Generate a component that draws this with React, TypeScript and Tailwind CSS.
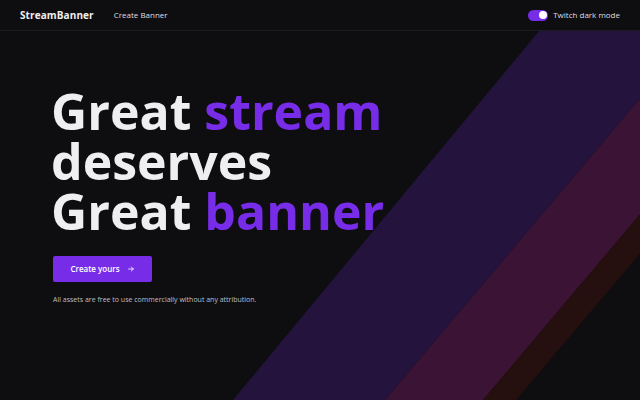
import React from "react";

export default function App() {
  return (
    <div
      className="relative w-[640px] h-[400px] overflow-hidden bg-[#0e0e10] text-[#efeff1]"
      style={{ fontFamily: '"Open Sans", "Noto Sans", sans-serif' }}
    >
      <svg
        className="absolute inset-0"
        width="640"
        height="400"
        viewBox="0 0 640 400"
      >
        <polygon points="539,31 697,31 385,400 233,400" fill="#23133d" />
        <polygon points="697,31 795,31 483,400 385,400" fill="#3a1335" />
        <polygon points="795,31 828,31 516,400 483,400" fill="#26100f" />
      </svg>

      <header className="relative flex items-center h-[31px] border-b border-[#1c1c20] px-5 bg-[#0e0e10]">
        <div className="text-[10px] font-bold tracking-[0.1px]">StreamBanner</div>
        <div className="ml-[20px] text-[8px] text-[#dedee3]">Create Banner</div>
        <div className="ml-auto flex items-center gap-[5px]">
          <div className="w-[20px] h-[11px] rounded-full bg-[#772ce8] flex items-center justify-end px-[1.5px]">
            <div className="w-[8px] h-[8px] rounded-full bg-white" />
          </div>
          <div className="text-[8px] text-[#dedee3]">Twitch dark mode</div>
        </div>
      </header>

      <main className="relative pl-[51px] pt-[55px]">
        <h1 className="text-[50px] font-bold leading-[50px]">
          <div>
            Great <span className="text-[#772ce8]">stream</span>
          </div>
          <div>deserves</div>
          <div>
            Great <span className="text-[#772ce8]">banner</span>
          </div>
        </h1>
        <button className="mt-[20px] ml-[2px] w-[99px] h-[26px] rounded-[2px] bg-[#772ce8] text-white text-[8px] font-semibold flex items-center justify-center gap-[7px]">
          <span>Create yours</span>
          <svg width="8" height="8" viewBox="0 0 24 24" fill="none" stroke="white" strokeWidth="2.5" strokeLinecap="round" strokeLinejoin="round">
            <path d="M5 12h14M13 6l6 6-6 6" />
          </svg>
        </button>
        <p className="mt-[13px] ml-[2px] text-[7px] text-[#bfbfc6]">
          All assets are free to use commercially without any attribution.
        </p>
      </main>
    </div>
  );
}
